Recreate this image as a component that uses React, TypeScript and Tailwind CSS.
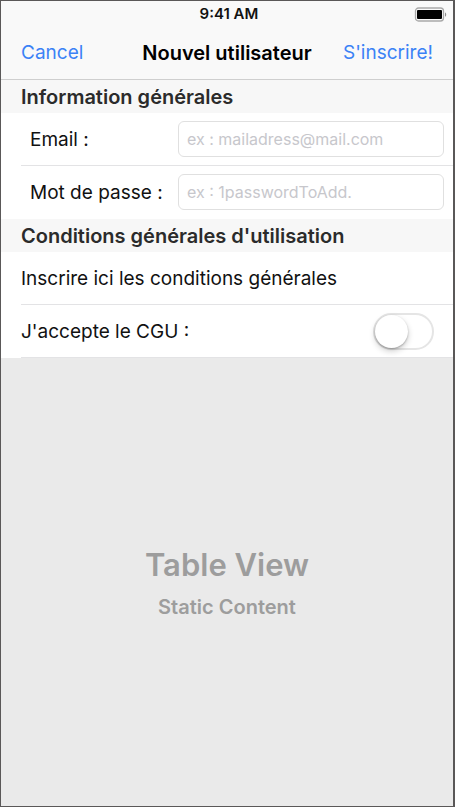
import type { ReactNode } from "react";

function StatusBar() {
  return (
    <div className="grid h-[26px] grid-cols-[1fr_auto_1fr] items-center">
      <span />
      <span className="pl-1 text-[15px] font-semibold">9:41 AM</span>
      <svg className="mr-1.5 justify-self-end" width="33" height="15" viewBox="0 0 33 15" role="img" aria-label="Battery full">
        <rect x="1.5" y="1" width="28" height="13" rx="3" fill="#f9f9f9" stroke="#a9a9a9" strokeWidth="1.3" />
        <rect x="3" y="3" width="25" height="9" rx="1" fill="#000" />
        <path d="M31 5.4c1.6.5 1.6 3.7 0 4.2z" fill="#8c8c8c" />
      </svg>
    </div>
  );
}

function SectionHeader({ children }: { children: ReactNode }) {
  return (
    <h2 className="flex h-[33px] items-center bg-[#f7f7f7] pl-5 text-xl font-semibold text-[#2b2b2b]">
      {children}
    </h2>
  );
}

function Row({ children, separator = true }: { children: ReactNode; separator?: boolean }) {
  return (
    <div className={`ml-5 flex h-[53px] items-center border-b ${separator ? "border-[#e3e3e5]" : "border-transparent"}`}>
      {children}
    </div>
  );
}

function Field({ id, label, type, placeholder, separator }: { id: string; label: string; type: string; placeholder: string; separator?: boolean }) {
  return (
    <Row separator={separator}>
      <label htmlFor={id} className="w-[157px] shrink-0 pt-0.5 pl-[9px]">
        {label}
      </label>
      <input
        id={id}
        type={type}
        placeholder={placeholder}
        className="mr-[9px] h-9 min-w-0 flex-1 rounded-md border border-[#e0e0e0] bg-white px-2 text-base outline-none placeholder:text-[#c7c7cc]"
      />
    </Row>
  );
}

export default function App() {
  return (
    <div className="flex min-h-screen flex-col border border-r-2 border-[#5a5858] bg-[#eaeaea] font-['Inter','Liberation_Sans',sans-serif] text-[19px] text-[#111]">
      <header className="border-b border-[#cfcfcf] bg-[#f9f9f9]">
        <StatusBar />
        <nav className="grid h-[52px] grid-cols-[1fr_auto_1fr] items-center px-5">
          <button type="button" className="justify-self-start text-[#3b82f6]">Cancel</button>
          <h1 className="text-xl font-semibold text-black">Nouvel utilisateur</h1>
          <button type="button" className="justify-self-end text-[#3b82f6]">S'inscrire!</button>
        </nav>
      </header>

      <form className="bg-white">
        <SectionHeader>Information générales</SectionHeader>
        <Field id="email" label="Email :" type="email" placeholder="ex : mailadress@mail.com" />
        <Field id="password" label="Mot de passe :" type="password" placeholder="ex : 1passwordToAdd." separator={false} />
        <SectionHeader>Conditions générales d'utilisation</SectionHeader>
        <Row>
          <p className="pt-0.5">Inscrire ici les conditions générales</p>
        </Row>
        <Row>
          <label htmlFor="terms" className="flex-1 pt-0.5">J'accepte le CGU :</label>
          <input
            id="terms"
            type="checkbox"
            role="switch"
            className="mr-[19px] flex h-[37px] w-[61px] appearance-none items-center rounded-full border-2 border-[#e5e5e5] bg-white before:size-[33px] before:rounded-full before:bg-white before:shadow-[0_3px_6px_rgba(0,0,0,0.2),0_1px_2px_rgba(0,0,0,0.25)] checked:justify-end checked:bg-green-500"
          />
        </Row>
      </form>

      <main className="flex flex-1 flex-col items-center justify-center gap-2 pt-0.5 font-semibold text-[#9d9d9d]">
        <p className="text-[31px] leading-10">Table View</p>
        <p className="text-xl leading-7">Static Content</p>
      </main>
    </div>
  );
}
